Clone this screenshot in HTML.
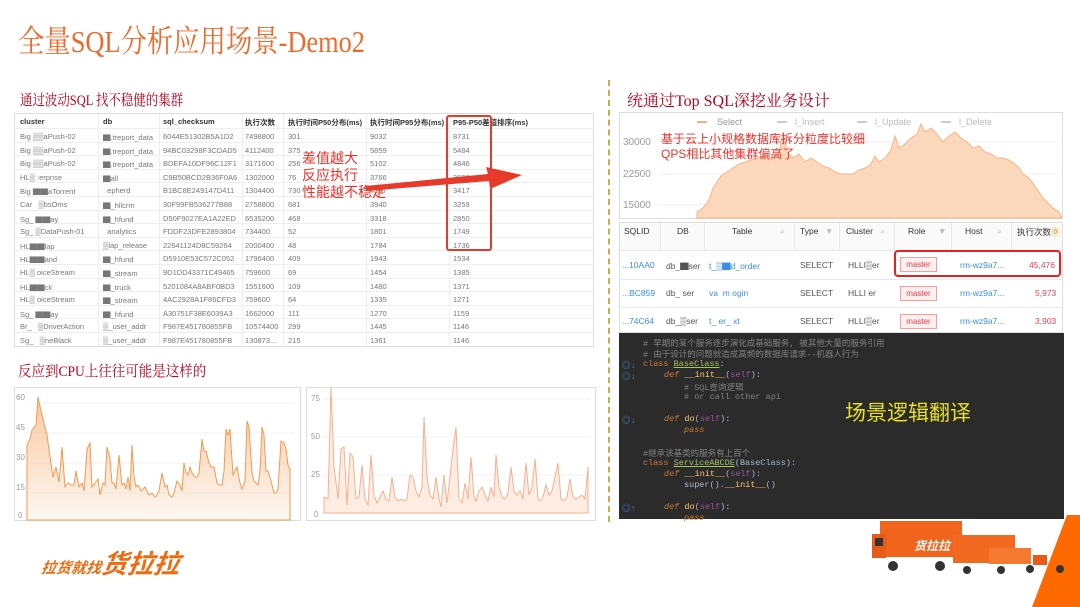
<!DOCTYPE html>
<html><head><meta charset="utf-8"><style>
*{margin:0;padding:0;box-sizing:border-box}
body{width:1080px;height:607px;background:#fff;position:relative;overflow:hidden;font-family:"Liberation Sans","Noto Sans CJK SC",sans-serif}
.a{position:absolute;white-space:nowrap}
.title{left:18px;top:22px;font-family:"Liberation Serif","Noto Serif CJK SC",serif;font-size:31px;color:#ee6a2c;line-height:40px;transform:scaleX(0.85);transform-origin:0 0}
.sub{font-family:"Liberation Serif","Noto Serif CJK SC",serif;font-size:15px;color:#b8001c;transform-origin:0 0}
.tbl{left:14px;top:113px;width:580px;height:234px;border:1px solid #ddd;font-size:7.5px;color:#777}
.tbl .r{position:absolute;left:0;width:578px;height:13.6px;border-bottom:1px solid #eee}
.tbl .r span{position:absolute;top:3px}
.tbl .h span{color:#333;font-weight:bold}
.vl{position:absolute;top:0;width:1px;background:#eee;height:232px}
.rt{left:619px;top:222px;width:444px;height:111px;border:1px solid #ddd;font-size:8.5px;color:#555}
.rt span{position:absolute}
.m{position:absolute;border:1px solid #f5a0a0;background:#fff0f0;color:#e84050;font-size:8px;width:37px;height:15px;text-align:center;line-height:13px}
.code{left:619px;top:333px;width:445px;height:186px;background:#2b2b2b;font-family:"Liberation Mono","Noto Sans CJK SC",monospace;font-size:8.5px;color:#a9b7c6}
.code div{position:absolute;white-space:pre}
.k{color:#cc7832}.c{color:#808080}.g{color:#a5c261;text-decoration:underline}.s{color:#94558d}.f{color:#ffc66d}
.ic{color:#4a90b8;left:3px}
</style></head><body>
<div class="a title">全量SQL分析应用场景-Demo2</div>
<div class="a sub" style="left:20px;top:89px;transform:scaleX(0.83)">通过波动SQL 找不稳健的集群</div>
<div class="a sub" style="left:627px;top:88px;font-size:16px">统通过Top SQL深挖业务设计</div>
<div class="a sub" style="left:18px;top:360px;transform:scaleX(0.9)">反应到CPU上往往可能是这样的</div>
<div class="a" style="left:608px;top:80px;height:442px;border-left:2px dashed #d4a84a"></div>

<div class="a tbl">
<div class="vl" style="left:83px"></div><div class="vl" style="left:144px"></div><div class="vl" style="left:227px"></div><div class="vl" style="left:268px"></div><div class="vl" style="left:351px"></div><div class="vl" style="left:434px"></div>
<div class="r h" style="top:0;height:15px"><span style="left:5px">cluster</span><span style="left:88px">db</span><span style="left:148px">sql_checksum</span><span style="left:230px">执行次数</span><span style="left:273px">执行时间P50分布(ms)</span><span style="left:355px">执行时间P95分布(ms)</span><span style="left:438px">P95-P50差值排序(ms)</span></div>
<div class="r" style="top:15px"><span style="left:5px">Big ▒▒aPush-02</span><span style="left:88px">▇.treport_data</span><span style="left:148px">6044E51302B5A1D2</span><span style="left:230px">7498800</span><span style="left:273px">301</span><span style="left:355px">9032</span><span style="left:438px">8731</span></div>
<div class="r" style="top:28.6px"><span style="left:5px">Big ▒▒aPush-02</span><span style="left:88px">▇.treport_data</span><span style="left:148px">94BC03298F3CDAD5</span><span style="left:230px">4112400</span><span style="left:273px">375</span><span style="left:355px">5859</span><span style="left:438px">5484</span></div>
<div class="r" style="top:42.2px"><span style="left:5px">Big ▒▒aPush-02</span><span style="left:88px">▇.treport_data</span><span style="left:148px">BDEFA10DF96C12F1</span><span style="left:230px">3171600</span><span style="left:273px">256</span><span style="left:355px">5102</span><span style="left:438px">4846</span></div>
<div class="r" style="top:55.8px"><span style="left:5px">HL▒ :erprise</span><span style="left:88px">▇all</span><span style="left:148px">C9B50BCD2B36F0A6</span><span style="left:230px">1302000</span><span style="left:273px">76</span><span style="left:355px">3766</span><span style="left:438px">3690</span></div>
<div class="r" style="top:69.4px"><span style="left:5px">Big ▇▇aTorrent</span><span style="left:88px">&nbsp;&nbsp;epherd</span><span style="left:148px">B1BC8E249147D411</span><span style="left:230px">1304400</span><span style="left:273px">730</span><span style="left:355px">4147</span><span style="left:438px">3417</span></div>
<div class="r" style="top:83px"><span style="left:5px">Car&nbsp;&nbsp; ▒bsOms</span><span style="left:88px">▇_hllcrm</span><span style="left:148px">30F99FB536277B88</span><span style="left:230px">2758800</span><span style="left:273px">681</span><span style="left:355px">3940</span><span style="left:438px">3259</span></div>
<div class="r" style="top:96.6px"><span style="left:5px">Sg_ ▇▇ay</span><span style="left:88px">▇_hfund</span><span style="left:148px">D50F9027EA1A22ED</span><span style="left:230px">6535200</span><span style="left:273px">468</span><span style="left:355px">3318</span><span style="left:438px">2850</span></div>
<div class="r" style="top:110.2px"><span style="left:5px">Sg_ ▒DataPush-01</span><span style="left:88px">&nbsp;&nbsp;analytics</span><span style="left:148px">FDDF23DFE2893804</span><span style="left:230px">734400</span><span style="left:273px">52</span><span style="left:355px">1801</span><span style="left:438px">1749</span></div>
<div class="r" style="top:123.8px"><span style="left:5px">HL▇▇lap</span><span style="left:88px">▒lap_release</span><span style="left:148px">22641124D8C59264</span><span style="left:230px">2000400</span><span style="left:273px">48</span><span style="left:355px">1784</span><span style="left:438px">1736</span></div>
<div class="r" style="top:137.4px"><span style="left:5px">HL▇▇and</span><span style="left:88px">▇_hfund</span><span style="left:148px">D5910E53C572C052</span><span style="left:230px">1796400</span><span style="left:273px">409</span><span style="left:355px">1943</span><span style="left:438px">1534</span></div>
<div class="r" style="top:151px"><span style="left:5px">HL▒ oiceStream</span><span style="left:88px">▇_stream</span><span style="left:148px">9D1DD43371C49465</span><span style="left:230px">759600</span><span style="left:273px">69</span><span style="left:355px">1454</span><span style="left:438px">1385</span></div>
<div class="r" style="top:164.6px"><span style="left:5px">HL▇▇ck</span><span style="left:88px">▇_truck</span><span style="left:148px">5201084A8ABF0BD3</span><span style="left:230px">1551600</span><span style="left:273px">109</span><span style="left:355px">1480</span><span style="left:438px">1371</span></div>
<div class="r" style="top:178.2px"><span style="left:5px">HL▒ oiceStream</span><span style="left:88px">▇_stream</span><span style="left:148px">4AC2928A1F86CFD3</span><span style="left:230px">759600</span><span style="left:273px">64</span><span style="left:355px">1335</span><span style="left:438px">1271</span></div>
<div class="r" style="top:191.8px"><span style="left:5px">Sg_ ▇▇ay</span><span style="left:88px">▇_hfund</span><span style="left:148px">A30751F38E6039A3</span><span style="left:230px">1662000</span><span style="left:273px">111</span><span style="left:355px">1270</span><span style="left:438px">1159</span></div>
<div class="r" style="top:205.4px"><span style="left:5px">Br_&nbsp;&nbsp; ▒DriverAction</span><span style="left:88px">▒_user_addr</span><span style="left:148px">F987E451780855FB</span><span style="left:230px">10574400</span><span style="left:273px">299</span><span style="left:355px">1445</span><span style="left:438px">1146</span></div>
<div class="r" style="top:219px;border:0"><span style="left:5px">Sg_&nbsp;&nbsp; ▒neBlack</span><span style="left:88px">▒_user_addr</span><span style="left:148px">F987E451780855FB</span><span style="left:230px">130873...</span><span style="left:273px">215</span><span style="left:355px">1361</span><span style="left:438px">1146</span></div>
</div>
<div class="a" style="left:446px;top:115px;width:46px;height:136px;border:2px solid #e83a2a;border-radius:3px"></div>
<div class="a" style="left:302px;top:150px;font-size:14px;line-height:17px;color:#f0302a;white-space:normal;width:120px">差值越大<br>反应执行<br>性能越不稳定</div>
<svg class="a" style="left:360px;top:160px" width="170" height="40"><polygon points="5,26 128,14 126,7 162,15 130,29 129,21 6,31" fill="#e83a2a"/></svg>

<svg class="a" style="left:14px;top:387px" width="287" height="134">
<rect x="0.5" y="0.5" width="286" height="133" fill="#fff" stroke="#ddd"/>
<g stroke="#f0f0f0"><line x1="16" y1="16" x2="280" y2="16"/><line x1="16" y1="46" x2="280" y2="46"/><line x1="16" y1="76" x2="280" y2="76"/><line x1="16" y1="106" x2="280" y2="106"/></g>
<g font-size="8" fill="#999"><text x="2" y="13">60</text><text x="2" y="43">45</text><text x="2" y="73">30</text><text x="2" y="103">15</text><text x="4" y="131">0</text></g>
<defs><linearGradient id="g1" x1="0" y1="0" x2="0" y2="1"><stop offset="0" stop-color="#f4a460" stop-opacity=".6"/><stop offset="1" stop-color="#f4a460" stop-opacity=".08"/></linearGradient></defs>
<polygon fill="url(#g1)" stroke="#f29a50" stroke-width="1" points="13,133 13,58 16,52 18,43 22,38 24,10 27,24 30,36 33,48 36,70 39,90 42,80 45,95 48,60 51,100 54,96 57,98 60,98 62,84 65,100 68,96 70,104 73,62 76,56 78,100 81,96 84,92 86,108 89,96 91,98 93,60 96,72 98,96 100,96 102,102 105,68 108,98 110,96 112,102 114,90 116,104 118,58 120,90 122,100 124,98 127,104 131,100 133,104 135,108 138,106 141,110 143,108 145,104 148,86 151,100 153,98 155,108 158,110 160,106 163,94 166,98 168,104 170,76 172,86 174,88 176,80 178,86 181,90 183,90 185,86 188,52 190,64 192,64 195,76 197,80 200,80 203,96 205,98 208,98 210,84 212,42 214,48 216,42 219,88 221,84 223,80 226,96 228,102 231,94 233,34 235,40 238,86 240,94 242,96 244,98 246,84 248,40 250,48 252,84 254,84 257,94 260,106 262,106 264,102 267,54 270,56 272,62 274,78 276,82 276,133"/>
</svg>
<svg class="a" style="left:306px;top:387px" width="290" height="134">
<rect x="0.5" y="0.5" width="289" height="133" fill="#fff" stroke="#ddd"/>
<g stroke="#f0f0f0"><line x1="16" y1="12" x2="284" y2="12"/><line x1="16" y1="50" x2="284" y2="50"/><line x1="16" y1="88" x2="284" y2="88"/><line x1="16" y1="126" x2="284" y2="126"/></g>
<g font-size="8" fill="#999"><text x="5" y="14">75</text><text x="5" y="52">50</text><text x="5" y="90">25</text><text x="8" y="130">0</text></g>
<polygon fill="#fdece2" stroke="#f7b08c" stroke-width="1" points="18,126 18,110 22,112 25,0 28,80 32,112 35,62 38,60 41,118 44,66 47,70 50,112 53,110 56,78 59,112 62,118 65,68 68,108 71,116 74,110 77,104 80,112 83,114 86,90 89,110 92,114 95,112 98,114 101,112 104,88 107,90 110,104 113,110 116,100 118,30 121,90 124,108 127,112 130,90 133,112 135,120 138,88 141,116 144,90 147,62 150,40 153,112 156,116 159,96 162,112 165,70 168,110 170,114 173,104 176,100 179,108 182,114 185,100 188,110 190,68 193,100 196,110 199,112 202,106 205,80 208,104 211,108 214,104 217,112 220,76 223,108 226,100 229,72 232,112 234,114 237,110 240,98 243,108 246,104 249,90 252,76 255,112 258,114 261,110 264,92 267,110 270,112 273,110 276,108 279,112 282,80 282,126"/>
</svg>

<svg class="a" style="left:619px;top:112px" width="444" height="107">
<rect x="0.5" y="0.5" width="443" height="106" fill="#fff" stroke="#ddd"/>
<g stroke="#eee"><line x1="40" y1="30" x2="440" y2="30"/><line x1="40" y1="62" x2="440" y2="62"/><line x1="40" y1="93" x2="440" y2="93"/></g>
<g font-size="10" fill="#999"><text x="4" y="33">30000</text><text x="4" y="65">22500</text><text x="4" y="96">15000</text></g>
<g font-size="9" fill="#bbb"><line x1="78" y1="10" x2="88" y2="10" stroke="#f5b080" stroke-width="2"/><text x="98" y="13" fill="#999">Select</text><line x1="158" y1="10" x2="168" y2="10" stroke="#ccc" stroke-width="2"/><text x="176" y="13">l_Insert</text><line x1="238" y1="10" x2="248" y2="10" stroke="#ccc" stroke-width="2"/><text x="256" y="13">l_Update</text><line x1="322" y1="10" x2="332" y2="10" stroke="#ccc" stroke-width="2"/><text x="340" y="13">l_Delete</text></g>
<polygon fill="#fbd7bb" stroke="#f8b485" stroke-width="1" points="78,106 78,100 84,96 90,88 94,76 98,70 102,64 108,60 114,56 120,52 126,50 132,48 138,46 144,44 150,48 156,44 160,40 164,20 168,40 174,46 180,42 186,50 192,46 198,50 204,54 210,56 216,60 222,62 228,62 234,62 240,58 246,56 252,52 256,44 260,50 266,46 272,38 276,24 280,36 286,32 292,26 298,22 302,12 306,20 312,16 318,22 324,30 330,24 336,20 342,26 348,30 354,36 360,34 366,40 372,42 378,46 384,46 390,48 396,52 400,56 404,62 410,66 416,74 420,80 424,86 430,92 434,96 440,100 443,106"/>
</svg>
<div class="a" style="left:661px;top:132px;font-size:12px;line-height:15px;color:#f0302a">基于云上小规格数据库拆分粒度比较细<br>QPS相比其他集群偏高了</div>

<div class="a rt">
<div style="position:absolute;left:0;top:0;width:442px;height:28px;background:#fafafa;border-bottom:1px solid #e8e8e8"></div>
<div style="position:absolute;left:0;top:56px;width:442px;border-top:1px solid #e8e8e8"></div>
<div style="position:absolute;left:0;top:84px;width:442px;border-top:1px solid #e8e8e8"></div>
<div class="vl" style="left:40px;height:28px;background:#e8e8e8"></div><div class="vl" style="left:84px;height:28px;background:#e8e8e8"></div><div class="vl" style="left:174px;height:28px;background:#e8e8e8"></div><div class="vl" style="left:219px;height:28px;background:#e8e8e8"></div><div class="vl" style="left:274px;height:28px;background:#e8e8e8"></div><div class="vl" style="left:331px;height:28px;background:#e8e8e8"></div><div class="vl" style="left:391px;height:28px;background:#e8e8e8"></div>
<span style="left:4px;top:3px;color:#333">SQLID</span><span style="left:57px;top:3px;color:#333">DB</span><span style="left:112px;top:3px;color:#333">Table</span><span style="left:160px;top:3px;color:#bbb">⌕</span><span style="left:180px;top:3px;color:#333">Type</span><span style="left:205px;top:3px;color:#bbb">▼</span><span style="left:226px;top:3px;color:#333">Cluster</span><span style="left:260px;top:3px;color:#bbb">⌕</span><span style="left:288px;top:3px;color:#333">Role</span><span style="left:318px;top:3px;color:#bbb">▼</span><span style="left:345px;top:3px;color:#333">Host</span><span style="left:377px;top:3px;color:#bbb">⌕</span><span style="left:397px;top:3px;color:#333">执行次数<b style="color:#f0a020">⓪</b></span>
<span style="left:2px;top:37px;color:#3a8ee6">...10AA0</span><span style="left:46px;top:37px">db_▇ser</span><span style="left:89px;top:37px;color:#3a8ee6">t_▒▇d_order</span><span style="left:180px;top:37px">SELECT</span><span style="left:228px;top:37px">HLLI▒er</span><span style="left:409px;top:37px;color:#e84050">45,476</span>
<span style="left:2px;top:65px;color:#3a8ee6">...BC859</span><span style="left:46px;top:65px">db_ ser</span><span style="left:89px;top:65px;color:#3a8ee6">va&nbsp; m ogin</span><span style="left:180px;top:65px">SELECT</span><span style="left:228px;top:65px">HLLI er</span><span style="left:415px;top:65px;color:#e84050">5,973</span>
<span style="left:2px;top:93px;color:#3a8ee6">...74C64</span><span style="left:46px;top:93px">db_▒ser</span><span style="left:89px;top:93px;color:#3a8ee6">t_ er_ xt</span><span style="left:180px;top:93px">SELECT</span><span style="left:228px;top:93px">HLLI▒er</span><span style="left:415px;top:93px;color:#e84050">3,903</span>
<span style="left:340px;top:37px;color:#3a8ee6">rm-wz9a7...</span><span style="left:340px;top:65px;color:#3a8ee6">rm-wz9a7...</span><span style="left:340px;top:93px;color:#3a8ee6">rm-wz9a7...</span>
<div class="m" style="left:280px;top:34px">master</div><div class="m" style="left:280px;top:63px">master</div><div class="m" style="left:280px;top:91px">master</div>
</div>
<div class="a" style="left:894px;top:250px;width:167px;height:27px;border:2px solid #e82020;border-radius:4px"></div>

<div class="a code">
<div style="left:24px;top:4px" class="c"># 早期的某个服务逐步演化成基础服务, 被其他大量的服务引用</div>
<div style="left:24px;top:15px" class="c"># 由于设计的问题就造成高频的数据库请求--机器人行为</div>
<div class="ic" style="top:26px">◎↓</div><div style="left:24px;top:26px"><span class="k">class</span> <span class="g">BaseClass</span>:</div>
<div class="ic" style="top:37px">◎↓</div><div style="left:45px;top:37px"><span class="k"><i>def</i></span> <span class="f">__init__</span>(<span class="s">self</span>):</div>
<div style="left:65px;top:48px" class="c"># SQL查询逻辑</div>
<div style="left:65px;top:59px" class="c"># or call other api</div>
<div class="ic" style="top:81px">◎↓</div><div style="left:45px;top:81px"><span class="k"><i>def</i></span> <span class="f">do</span>(<span class="s">self</span>):</div>
<div style="left:65px;top:92px" class="k"><i>pass</i></div>
<div style="left:24px;top:114px" class="c">#继承该基类的服务有上百个</div>
<div style="left:24px;top:125px"><span class="k">class</span> <span class="g">ServiceABCDE</span>(BaseClass):</div>
<div style="left:45px;top:136px"><span class="k"><i>def</i></span> <span class="f">__init__</span>(<span class="s">self</span>):</div>
<div style="left:65px;top:147px">super().<span class="f">__init__</span>()</div>
<div class="ic" style="top:169px;color:#4a80d8">◎↑</div><div style="left:45px;top:169px"><span class="k"><i>def</i></span> <span class="f">do</span>(<span class="s">self</span>):</div>
<div style="left:65px;top:180px" class="k"><i>pass</i></div>
<div style="left:226px;top:64px;font-family:'Liberation Sans','Noto Sans CJK SC',sans-serif;font-size:21px;color:#e8e020">场景逻辑翻译</div>
</div>

<div class="a" style="left:42px;top:544px;font-size:15px;font-weight:bold;font-style:italic;color:#f06a10;transform:skewX(-8deg)">拉货就找<span style="font-size:26px">货拉拉</span></div>
<svg class="a" style="left:0;top:0" width="1080" height="607"><polygon points="1067,515 1080,515 1080,607 1032,607" fill="#ff6a00"/>
<rect x="880" y="521" width="82" height="36" fill="#f0641e"/><rect x="872" y="534" width="14" height="24" fill="#e85a18"/><rect x="875" y="538" width="8" height="8" fill="#333"/>
<rect x="953" y="535" width="62" height="28" fill="#f26a22"/><rect x="989" y="548" width="42" height="16" fill="#f37a30"/><rect x="1033" y="555" width="14" height="10" fill="#e85a18"/>
<g fill="#333"><circle cx="893" cy="566" r="5"/><circle cx="940" cy="566" r="5"/><circle cx="967" cy="570" r="4"/><circle cx="1001" cy="570" r="4"/><circle cx="1030" cy="569" r="4"/><circle cx="1060" cy="569" r="4"/></g>
<text x="914" y="550" font-size="12" fill="#fff" font-weight="bold" font-style="italic">货拉拉</text></svg>
</body></html>
